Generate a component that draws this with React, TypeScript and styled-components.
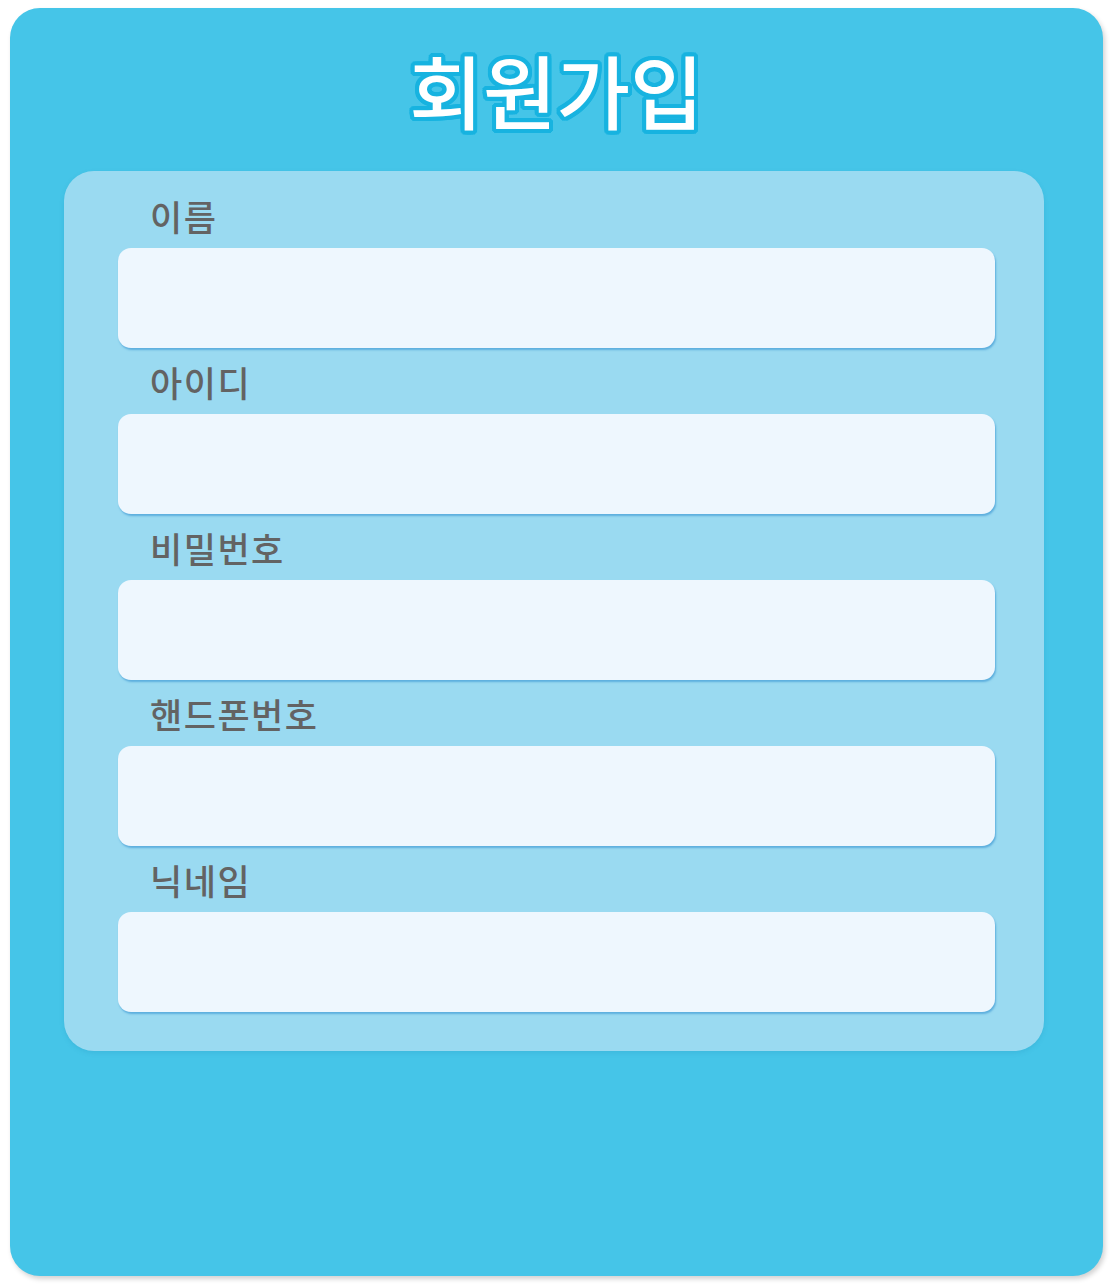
import React from 'react';
import styled, { createGlobalStyle } from 'styled-components';

const GlobalStyle = createGlobalStyle`
  body {
    margin: 0;
    background: #ffffff;
    font-family: "Noto Sans CJK KR", "Noto Sans", sans-serif;
  }
`;

const Page = styled.div`
  padding: 8px 8px 8px 10px;
  width: 1111px;
  box-sizing: border-box;
`;

const Card = styled.div`
  width: 1093px;
  height: 1268px;
  box-sizing: border-box;
  background-color: #45c5e8;
  border-radius: 30px;
  box-shadow: 2px 3px 5px rgba(0, 0, 0, 0.18);
  display: flex;
  flex-direction: column;
  align-items: center;
`;

const outline = '#17b3e0';

const Title = styled.h1`
  margin: 25px 0 0;
  height: 138px;
  font-size: 80px;
  font-weight: 500;
  line-height: 110px;
  color: #ffffff;
  text-shadow:
    4px 0 0 ${outline}, -4px 0 0 ${outline}, 0 4px 0 ${outline}, 0 -4px 0 ${outline},
    3px 3px 0 ${outline}, -3px 3px 0 ${outline}, 3px -3px 0 ${outline}, -3px -3px 0 ${outline},
    4px 2px 0 ${outline}, -4px 2px 0 ${outline}, 4px -2px 0 ${outline}, -4px -2px 0 ${outline},
    2px 4px 0 ${outline}, -2px 4px 0 ${outline}, 2px -4px 0 ${outline}, -2px -4px 0 ${outline};
`;

const Panel = styled.div`
  width: 980px;
  box-sizing: border-box;
  margin-right: 5px;
  padding: 25px 49px 39px 54px;
  background-color: #9adaf1;
  border-radius: 30px;
  box-shadow: 0 2px 4px rgba(40, 150, 190, 0.25);
  display: flex;
  flex-direction: column;
  gap: 14px;
`;

const Field = styled.div`
  display: flex;
  flex-direction: column;
`;

const Label = styled.label`
  padding-left: 32px;
  height: 52px;
  font-size: 35px;
  font-weight: 500;
  line-height: 40px;
  color: #636363;
  letter-spacing: 1.5px;
`;

const Input = styled.input`
  height: 100px;
  box-sizing: border-box;
  border: none;
  outline: none;
  border-radius: 13px;
  background-color: #eef7fe;
  box-shadow: 1px 2px 2px rgba(60, 150, 210, 0.65);
  font-size: 28px;
  padding: 0 24px;
`;

const fields = ['이름', '아이디', '비밀번호', '핸드폰번호', '닉네임'];

export default function App() {
  return (
    <Page>
      <GlobalStyle />
      <Card>
        <Title>회원가입</Title>
        <Panel>
          {fields.map((label) => (
            <Field key={label}>
              <Label>{label}</Label>
              <Input type={label === '비밀번호' ? 'password' : 'text'} />
            </Field>
          ))}
        </Panel>
      </Card>
    </Page>
  );
}
